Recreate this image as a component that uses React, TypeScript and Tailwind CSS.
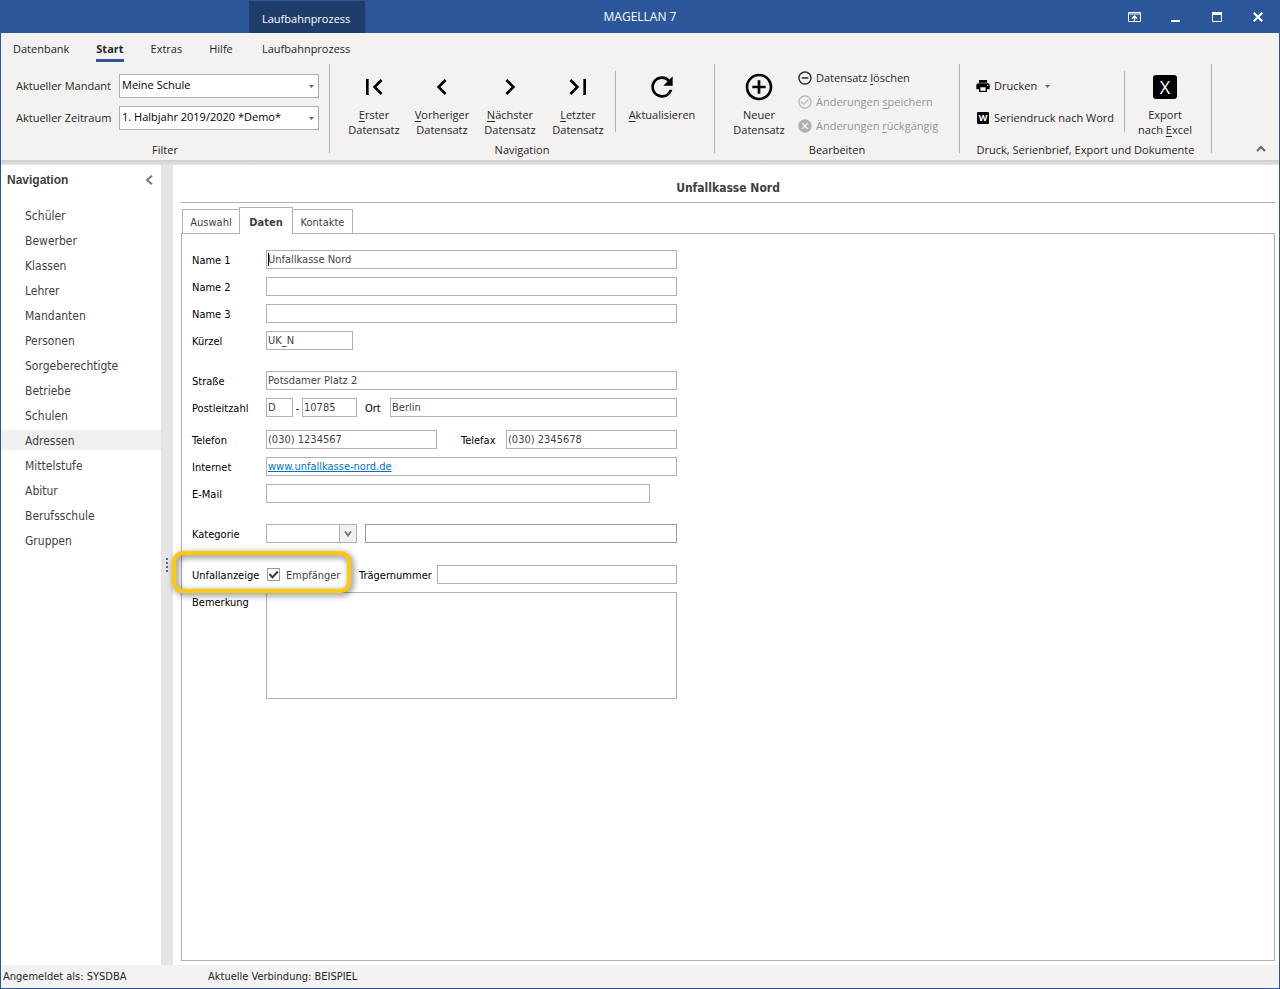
import { useState } from "react";
import type { ReactNode } from "react";
import {
  MdAddCircleOutline,
  MdCancel,
  MdCheckCircleOutline,
  MdChevronLeft,
  MdChevronRight,
  MdFirstPage,
  MdLastPage,
  MdPrint,
  MdRefresh,
  MdRemoveCircleOutline,
} from "react-icons/md";

const RIBBON_FONT = "font-['Open_Sans','Noto_Sans',sans-serif]";
const FORM_FONT = "font-['DejaVu_Sans_Condensed','Noto_Sans',sans-serif]";

const navItems = [
  "Schüler",
  "Bewerber",
  "Klassen",
  "Lehrer",
  "Mandanten",
  "Personen",
  "Sorgeberechtigte",
  "Betriebe",
  "Schulen",
  "Adressen",
  "Mittelstufe",
  "Abitur",
  "Berufsschule",
  "Gruppen",
];

function TitleBar() {
  const button = "flex h-full w-[41px] items-center justify-center";
  return (
    <header className="grid h-8 grid-cols-[1fr_auto_1fr] items-center bg-[#2b579a] text-[11px] text-white">
      <div className="flex h-full pl-[248px]">
        <div className="flex w-[116px] items-center bg-[#1e3d6b] pt-1 pl-[13px] whitespace-nowrap">Laufbahnprozess</div>
      </div>
      <h1 className="text-[12px]">MAGELLAN 7</h1>
      <div className="flex h-full justify-end pr-px">
        <button className={button} aria-label="Menübandanzeige">
          <svg width="13" height="10" viewBox="0 0 13 10" fill="none" stroke="#fff">
            <path d="M.5.5h12v9H.5zM1 2h11" />
            <path d="M6.500 9V4M4 6.500l2.500-2.500 2.500 2.500" strokeWidth="1.300" />
          </svg>
        </button>
        <button className={button} aria-label="Minimieren">
          <svg width="9" height="10" viewBox="0 0 9 10">
            <path d="M0 8h9v2H0z" fill="#fff" />
          </svg>
        </button>
        <button className={button} aria-label="Maximieren">
          <svg width="10" height="10" viewBox="0 0 10 10">
            <path d="M.5 1v8.500h9V1" fill="none" stroke="#fff" />
            <path d="M0 0h10v3H0z" fill="#fff" />
          </svg>
        </button>
        <button className={button} aria-label="Schließen">
          <svg width="10" height="10" viewBox="0 0 10 10">
            <path d="M.8.8l8.400 8.400M9.200.8L.8 9.200" stroke="#fff" strokeWidth="2.200" />
          </svg>
        </button>
      </div>
    </header>
  );
}

function RibbonTab({ label, active = false }: { label: string; active?: boolean }) {
  return (
    <button className="flex flex-col px-[13px] pt-2 leading-4 whitespace-nowrap">
      <span className={active ? "font-bold" : ""}>{label}</span>
      {active && <span className="mt-0.5 h-[3px] w-full bg-[#2b579a]" />}
    </button>
  );
}

function Group({ title, width, children }: { title: string; width: string; children: ReactNode }) {
  return (
    <>
      <section className={`flex shrink-0 flex-col ${width}`} aria-label={title}>
        <div className="flex h-[78px] items-start">{children}</div>
        <div className="text-center leading-4">{title}</div>
      </section>
      <div className="h-[89px] w-px shrink-0 bg-[#b1b1b1]" />
    </>
  );
}

function BigButton({ icon, width, children }: { icon: ReactNode; width: string; children: ReactNode }) {
  return (
    <button className={`flex flex-col items-center gap-1 pt-[7px] leading-[15px] ${width}`}>
      <span className="flex h-8 items-center text-black">{icon}</span>
      <span>{children}</span>
    </button>
  );
}

function Key({ children }: { children: string }) {
  return <span className="underline underline-offset-2">{children}</span>;
}

function RibbonSelect({ id, label, value }: { id: string; label: string; value: string }) {
  return (
    <div className="flex items-center justify-between">
      <label htmlFor={id} className="whitespace-nowrap">
        {label}
      </label>
      <div className="grid w-[200px] items-center">
        <select
          id={id}
          className="col-start-1 row-start-1 h-6 w-full appearance-none border border-[#b1adab] bg-white px-0.5 pb-0.5 text-black outline-none"
        >
          <option>{value}</option>
        </select>
        <svg
          className="pointer-events-none col-start-1 row-start-1 mr-[5px] justify-self-end"
          width="5"
          height="3"
          viewBox="0 0 5 3"
        >
          <path d="M0 0h5L2.500 3z" fill="#666" />
        </svg>
      </div>
    </div>
  );
}

function SmallButton({ icon, disabled = false, children }: { icon: ReactNode; disabled?: boolean; children: ReactNode }) {
  return (
    <button disabled={disabled} className="flex h-6 items-center gap-[3px] whitespace-nowrap disabled:text-[#979593]">
      {icon}
      <span>{children}</span>
    </button>
  );
}

function Ribbon() {
  return (
    <div className="bg-[#f3f2f1] text-[11px] text-[#262626]">
      <nav className="flex h-[31px] pr-3" aria-label="Menüband">
        <div className="-ml-px flex w-[249px] gap-px">
          <RibbonTab label="Datenbank" />
          <RibbonTab label="Start" active />
          <RibbonTab label="Extras" />
          <RibbonTab label="Hilfe" />
        </div>
        <RibbonTab label="Laufbahnprozess" />
      </nav>
      <div className="flex h-24">
        <Group title="Filter" width="w-[328px]">
          <div className="flex w-full flex-col gap-2 pt-[10px] pr-[10px] pl-[15px]">
            <RibbonSelect id="mandant" label="Aktueller Mandant" value="Meine Schule" />
            <RibbonSelect id="zeitraum" label="Aktueller Zeitraum" value="1. Halbjahr 2019/2020 *Demo*" />
          </div>
        </Group>
        <Group title="Navigation" width="w-[384px]">
          <div className="flex pl-[10px]">
            <BigButton width="w-[68px]" icon={<MdFirstPage size={32} />}>
              <Key>E</Key>rster
              <br />
              Datensatz
            </BigButton>
            <BigButton width="w-[68px]" icon={<MdChevronLeft size={32} />}>
              <Key>V</Key>orheriger
              <br />
              Datensatz
            </BigButton>
            <BigButton width="w-[68px]" icon={<MdChevronRight size={32} />}>
              <Key>N</Key>ächster
              <br />
              Datensatz
            </BigButton>
            <BigButton width="w-[68px]" icon={<MdLastPage size={32} />}>
              <Key>L</Key>etzter
              <br />
              Datensatz
            </BigButton>
            <div className="mt-[7px] ml-[3px] h-[61px] w-px bg-[#b1b1b1]" />
            <BigButton width="w-[92px]" icon={<MdRefresh size={32} />}>
              <Key>A</Key>ktualisieren
            </BigButton>
          </div>
        </Group>
        <Group title="Bearbeiten" width="w-[244px]">
          <div className="flex gap-1 pl-[10px]">
            <BigButton width="w-[68px]" icon={<MdAddCircleOutline size={32} />}>
              Neuer
              <br />
              Datensatz
            </BigButton>
            <div className="flex flex-col pt-0.5">
              <SmallButton icon={<MdRemoveCircleOutline size={16} />}>
                Datensatz <Key>l</Key>öschen
              </SmallButton>
              <SmallButton disabled icon={<MdCheckCircleOutline size={16} color="#b8b8b8" />}>
                Änderungen <Key>s</Key>peichern
              </SmallButton>
              <SmallButton disabled icon={<MdCancel size={16} color="#b1b1b1" />}>
                Änderungen <Key>r</Key>ückgängig
              </SmallButton>
            </div>
          </div>
        </Group>
        <Group title="Druck, Serienbrief, Export und Dokumente" width="w-[251px]">
          <div className="flex w-full pl-[15px]">
            <div className="flex w-[149px] flex-col gap-2 pt-[10px]">
              <SmallButton icon={<MdPrint size={16} color="#000" />}>
                <span className="flex items-center gap-2">
                  Drucken
                  <svg width="5" height="3" viewBox="0 0 5 3">
                    <path d="M0 0h5L2.500 3z" fill="#666" />
                  </svg>
                </span>
              </SmallButton>
              <SmallButton
                icon={
                  <span className="mx-0.5 flex size-3 items-center justify-center rounded-[1px] bg-black text-[9px] leading-3 font-bold text-white">
                    W
                  </span>
                }
              >
                Seriendruck nach Word
              </SmallButton>
            </div>
            <div className="mt-[7px] h-[61px] w-px bg-[#b1b1b1]" />
            <BigButton
              width="w-[80px]"
              icon={
                <span className="flex size-6 items-center justify-center rounded-[3px] bg-black text-[18px] leading-6 text-white">
                  X
                </span>
              }
            >
              Export
              <br />
              nach <Key>E</Key>xcel
            </BigButton>
          </div>
        </Group>
        <div className="flex flex-1 items-end justify-end pr-[13px] pb-2">
          <button aria-label="Menüband einklappen">
            <svg width="10" height="7" viewBox="0 0 10 7">
              <path d="M1 6l4-4 4 4" fill="none" stroke="#666" strokeWidth="2" />
            </svg>
          </button>
        </div>
      </div>
    </div>
  );
}

function Sidebar() {
  return (
    <aside className="w-40 shrink-0 bg-white text-[#3f3f3f]">
      <div className="flex h-[30px] items-center justify-between pr-2 pl-1.5">
        <h2 className="font-['Liberation_Sans',Arial,sans-serif] text-[12px] font-bold">Navigation</h2>
        <button aria-label="Navigation einklappen">
          <svg width="8" height="10" viewBox="0 0 8 10">
            <path d="M7 .8L2 5l5 4.200" fill="none" stroke="#777" strokeWidth="2" />
          </svg>
        </button>
      </div>
      <ul className="flex flex-col gap-[5px] pt-[10px] text-[12px] leading-[18px]">
        {navItems.map((item) => (
          <li key={item}>
            <a href="#" className={`block pt-0.5 pl-6 ${item === "Adressen" ? "bg-[#f0f0f0]" : ""}`}>
              {item}
            </a>
          </li>
        ))}
      </ul>
    </aside>
  );
}

function Splitter() {
  return (
    <div className="flex w-3 shrink-0 flex-col items-center justify-center gap-0.5 bg-[#e5e5e5]">
      <span className="size-0.5 bg-[#666]" />
      <span className="size-0.5 bg-[#666]" />
      <span className="size-0.5 bg-[#666]" />
      <span className="size-0.5 bg-[#666]" />
    </div>
  );
}

const BOX = "h-[19px] border border-[#b1b1b1] bg-white px-px text-[#3f3f3f] outline-none";

function Row({ id, label, children }: { id: string; label: string; children: ReactNode }) {
  return (
    <div className="flex h-[19px] items-center">
      <label htmlFor={id} className="w-[74px] shrink-0 pt-0.5 whitespace-nowrap text-black">
        {label}
      </label>
      {children}
    </div>
  );
}

function AddressForm() {
  const [recipient, setRecipient] = useState(true);
  return (
    <form className="flex w-[485px] flex-col gap-[21px] text-[11px] leading-[15px]">
      <div className="flex flex-col gap-2">
        <Row id="name1" label="Name 1">
          <div className="grid flex-1 items-center">
            <input id="name1" defaultValue="Unfallkasse Nord" className={`${BOX} col-start-1 row-start-1 w-full`} />
            <span className="pointer-events-none col-start-1 row-start-1 ml-0.5 h-[13px] w-px bg-black" />
          </div>
        </Row>
        <Row id="name2" label="Name 2">
          <input id="name2" className={`${BOX} flex-1`} />
        </Row>
        <Row id="name3" label="Name 3">
          <input id="name3" className={`${BOX} flex-1`} />
        </Row>
        <Row id="kuerzel" label="Kürzel">
          <input id="kuerzel" defaultValue="UK_N" className={`${BOX} w-[87px]`} />
        </Row>
      </div>
      <div className="flex flex-col gap-[13px]">
        <div className="flex flex-col gap-2">
          <Row id="strasse" label="Straße">
            <input id="strasse" defaultValue="Potsdamer Platz 2" className={`${BOX} flex-1`} />
          </Row>
          <Row id="plz" label="Postleitzahl">
            <input aria-label="Land" defaultValue="D" className={`${BOX} w-[27px]`} />
            <span className="w-[9px] pt-0.5 text-center text-black">-</span>
            <input id="plz" defaultValue="10785" className={`${BOX} w-[55px]`} />
            <label htmlFor="ort" className="w-[33px] pt-0.5 pl-2 text-black">
              Ort
            </label>
            <input id="ort" defaultValue="Berlin" className={`${BOX} min-w-0 flex-1`} />
          </Row>
        </div>
        <div className="flex flex-col gap-2">
          <Row id="telefon" label="Telefon">
            <input id="telefon" defaultValue="(030) 1234567" className={`${BOX} w-[171px]`} />
            <label htmlFor="telefax" className="w-[69px] pt-0.5 pl-6 text-black">
              Telefax
            </label>
            <input id="telefax" defaultValue="(030) 2345678" className={`${BOX} min-w-0 flex-1`} />
          </Row>
          <Row id="internet" label="Internet">
            <div className={`${BOX} flex flex-1 items-center`}>
              <a id="internet" href="#" className="text-[#0072c6] underline">
                www.unfallkasse-nord.de
              </a>
            </div>
          </Row>
          <Row id="email" label="E-Mail">
            <input id="email" type="email" className={`${BOX} w-[384px]`} />
          </Row>
        </div>
      </div>
      <Row id="kategorie" label="Kategorie">
        <div className="grid w-[91px] items-center">
          <select id="kategorie" className={`${BOX} col-start-1 row-start-1 w-full appearance-none`} />
          <span className="pointer-events-none col-start-1 row-start-1 flex h-[19px] w-[18px] items-center justify-center justify-self-end border border-[#b1b1b1] bg-[#f0f0f0]">
            <svg width="8" height="6" viewBox="0 0 8 6">
              <path d="M1 .5l3 4 3-4" fill="none" stroke="#777" strokeWidth="2" />
            </svg>
          </span>
        </div>
        <input
          aria-label="Kategorie Bezeichnung"
          className="ml-2 h-[19px] min-w-0 flex-1 border border-[#999] bg-white outline-none"
        />
      </Row>
      <div className="flex flex-col gap-2">
        <div className="relative flex h-5 items-center">
          <span className="w-[75px] shrink-0 pt-0.5 text-black">Unfallanzeige</span>
          <label className="flex items-center gap-1.5 text-[#3f3f3f]">
            <span className="grid items-center">
              <input
                type="checkbox"
                checked={recipient}
                onChange={(e) => setRecipient(e.target.checked)}
                className="col-start-1 row-start-1 size-[13px] appearance-none border border-[#999] bg-white"
              />
              {recipient && (
                <svg className="pointer-events-none col-start-1 row-start-1" width="13" height="13" viewBox="0 0 13 13">
                  <path d="M2.500 6l3 3.300L10.800 3.500" fill="none" stroke="#333" strokeWidth="2" />
                </svg>
              )}
            </span>
            <span className="pt-0.5">Empfänger</span>
          </label>
          <label htmlFor="traeger" className="ml-auto w-[78px] pt-0.5 text-black">
            Trägernummer
          </label>
          <input id="traeger" className={`${BOX} w-[240px]`} />
          <div className="pointer-events-none absolute -top-[13px] -left-5 z-10 h-[42px] w-[179px] rounded-[11px] border-4 border-[#ffc90b] drop-shadow-[2px_2px_3px_rgba(0,0,0,0.6)]" />
        </div>
        <div className="flex items-start">
          <label htmlFor="bemerkung" className="w-[74px] pt-[3px] text-black">
            Bemerkung
          </label>
          <textarea
            id="bemerkung"
            className="h-[107px] flex-1 resize-none border border-[#b1b1b1] bg-white p-px outline-none"
          />
        </div>
      </div>
    </form>
  );
}

function Content() {
  return (
    <main className="flex min-w-0 flex-1 flex-col bg-white pr-1 pb-1 pl-2 text-[#3f3f3f]">
      <h2 className="flex h-[38px] items-center justify-center border-b border-[#b1b1b1] pt-2 text-[12px] font-bold">
        Unfallkasse Nord
      </h2>
      <div role="tablist" className="z-10 -mb-px flex items-end pt-1 pl-px text-[11px]">
        <button role="tab" className="h-[25px] w-[58px] border border-[#b1b1b1] pt-1">
          Auswahl
        </button>
        <button
          role="tab"
          aria-selected="true"
          className="-ml-px h-[27px] w-[54px] border border-b-0 border-[#b1b1b1] bg-white pt-1 font-bold"
        >
          Daten
        </button>
        <button role="tab" className="-ml-px h-[25px] w-[61px] border border-[#b1b1b1] pt-1">
          Kontakte
        </button>
      </div>
      <div role="tabpanel" className="flex-1 border border-[#b1b1b1] pt-4 pl-[10px]">
        <AddressForm />
      </div>
    </main>
  );
}

export default function App() {
  return (
    <div className={`flex min-h-screen flex-col border border-[#2b579a] bg-white ${RIBBON_FONT}`}>
      <TitleBar />
      <Ribbon />
      <div className="h-[5px] bg-linear-to-b from-[#cdcdcd] to-[#e3e3e3]" />
      <div className={`flex flex-1 ${FORM_FONT}`}>
        <Sidebar />
        <Splitter />
        <Content />
      </div>
      <footer className={`flex h-[23px] items-center bg-[#f3f2f1] px-0.5 pt-0.5 text-[11px] text-[#262626] ${FORM_FONT}`}>
        <span className="w-[205px]">Angemeldet als: SYSDBA</span>
        <span>Aktuelle Verbindung: BEISPIEL</span>
      </footer>
    </div>
  );
}
